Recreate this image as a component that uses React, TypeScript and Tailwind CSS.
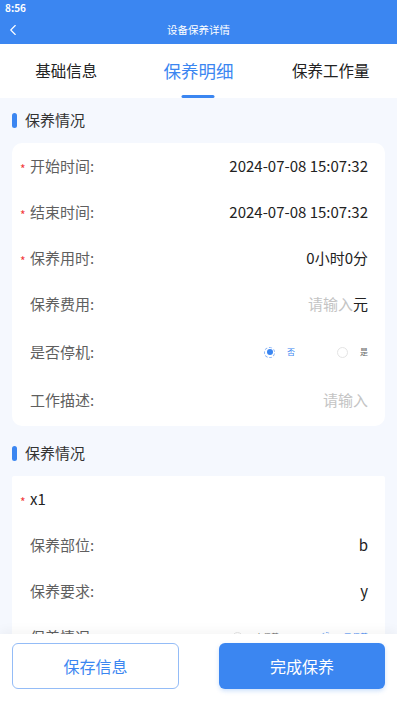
import { ChevronLeft } from 'lucide-react';

const FONT = { fontFamily: '"Noto Sans CJK SC", "Noto Sans", sans-serif' };

function Star({ show }: { show?: boolean }) {
  return (
    <span className="w-[9px] translate-y-[3px] text-[12px] leading-none text-[#f23b3b]">{show ? '*' : ''}</span>
  );
}

function Row({
  label,
  required,
  children,
  tall,
}: {
  label: string;
  required?: boolean;
  children?: React.ReactNode;
  tall?: boolean;
}) {
  return (
    <div className={`flex items-center pl-[8px] pr-[17px] ${tall ? 'h-[50px]' : 'h-[46px]'}`}>
      <Star show={required} />
      <span className="ml-[1px] text-[15px] text-[#5f5f5f]">{label}</span>
      <div className="ml-auto flex items-center text-[15px] text-[#222]">{children}</div>
    </div>
  );
}

function Radio({ checked, text }: { checked?: boolean; text: string }) {
  return (
    <div className="flex items-center">
      {checked ? (
        <span className="flex h-[11px] w-[11px] items-center justify-center rounded-full border border-dashed border-[#8db6f6]">
          <span className="h-[6px] w-[6px] rounded-full bg-[#3b86f1]" />
        </span>
      ) : (
        <span className="h-[11px] w-[11px] rounded-full border border-[#e4e4e4]" />
      )}
      <span className={`ml-[12px] text-[8px] leading-none ${checked ? 'text-[#3b86f1]' : 'text-[#666]'}`}>{text}</span>
    </div>
  );
}

function SectionTitle({ title }: { title: string }) {
  return (
    <div className="flex h-[45px] items-center pl-[12px]">
      <span className="h-[15px] w-[5px] rounded-full bg-[#3b86f1]" />
      <span className="ml-[8px] text-[15px] text-[#333]">{title}</span>
    </div>
  );
}

export default function App() {
  return (
    <div className="flex h-[706px] w-[397px] flex-col overflow-hidden bg-[#f5f8fe]" style={FONT}>
      {/* header */}
      <div className="bg-[#3b86f1] text-white">
        <div className="h-[16px] pl-[5px] text-[10px] font-bold leading-[16px]">8:56</div>
        <div className="relative flex h-[28px] items-center justify-center">
          <ChevronLeft className="absolute left-[4px] top-[5px] h-[18px] w-[18px]" strokeWidth={1.5} />
          <span className="text-[10.5px]">设备保养详情</span>
        </div>
      </div>

      {/* tabs */}
      <div className="grid h-[54px] grid-cols-3 bg-white">
        <div className="flex items-center justify-center text-[15.5px] text-[#222]">基础信息</div>
        <div className="relative flex items-center justify-center text-[17.5px] text-[#3b86f1]">
          保养明细
          <span className="absolute bottom-0 left-1/2 h-[3px] w-[33px] -translate-x-1/2 rounded-full bg-[#3b86f1]" />
        </div>
        <div className="flex items-center justify-center text-[15.5px] text-[#222]">保养工作量</div>
      </div>

      {/* content */}
      <div className="flex-1 overflow-hidden">
        <SectionTitle title="保养情况" />
        <div className="mx-[12px] rounded-[10px] bg-white pb-[3px]">
          <Row label="开始时间:" required>2024-07-08 15:07:32</Row>
          <Row label="结束时间:" required>2024-07-08 15:07:32</Row>
          <Row label="保养用时:" required>0小时0分</Row>
          <Row label="保养费用:">
            <span className="text-[#c4c4c4]">请输入</span>
            <span>元</span>
          </Row>
          <Row label="是否停机:" tall>
            <div className="flex items-center gap-[42px]">
              <Radio checked text="否" />
              <Radio text="是" />
            </div>
          </Row>
          <Row label="工作描述:">
            <span className="text-[#c4c4c4]">请输入</span>
          </Row>
        </div>

        <div className="mt-[5px]">
          <SectionTitle title="保养情况" />
        </div>
        <div className="mx-[12px] rounded-[2px] bg-white">
          <div className="flex h-[46px] items-center pl-[8px]">
            <Star show />
            <span className="ml-[1px] text-[15px] text-[#222]">x1</span>
          </div>
          <Row label="保养部位:">b</Row>
          <Row label="保养要求:">y</Row>
          <Row label="保养情况:">
            <div className="flex items-center gap-[42px]">
              <Radio text="未保养" />
              <Radio checked text="已保养" />
            </div>
          </Row>
        </div>
      </div>

      {/* bottom bar */}
      <div className="flex h-[72px] justify-between bg-white px-[12px] pt-[9px] shadow-[0_-4px_10px_rgba(0,0,0,0.04)]">
        <button className="h-[46px] w-[167px] rounded-[6px] border border-[#94bcf7] bg-white text-[16px] text-[#3b86f1]">
          保存信息
        </button>
        <button className="h-[46px] w-[166px] rounded-[6px] bg-[#3b86f1] text-[16px] text-white shadow-[0_2px_4px_rgba(59,134,241,0.25)]">
          完成保养
        </button>
      </div>
    </div>
  );
}
